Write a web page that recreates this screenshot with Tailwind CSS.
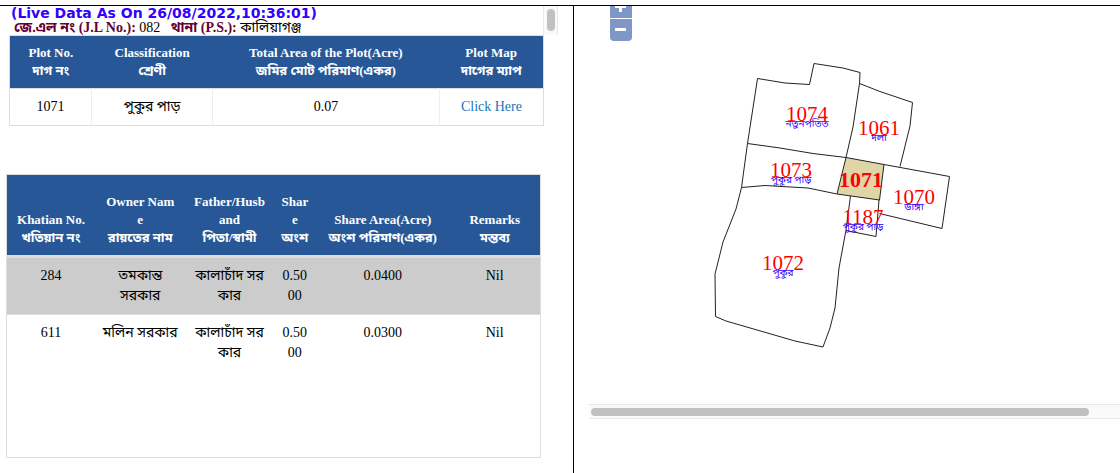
<!DOCTYPE html>
<html lang="bn">
<head>
<meta charset="utf-8">
<title>Plot Information</title>
<script src="https://cdn.jsdelivr.net/npm/@tailwindcss/browser@4"></script>
</head>
<body class="flex min-h-screen flex-col bg-white font-['Liberation_Serif','Noto_Sans_Bengali',serif] text-sm text-black">
<div class="h-[6px] border-b border-black"></div>
<main class="flex flex-1">
  <section class="w-[51.25%] shrink-0 border-r border-black">
    <header class="ml-[9px] mr-[15px] flex h-[29px]">
      <div class="flex-1 whitespace-nowrap pl-[2px]">
        <h1 class="font-['DejaVu_Sans',sans-serif] text-[14px] leading-[14px] font-bold text-[#3300ff]">(Live Data As On 26/08/2022,10:36:01)</h1>
        <p class="pl-[3px] leading-[15px]"><b class="text-[#660033]">জে.এল নং (J.L No.):</b> 082 &nbsp; <b class="text-[#660033]">থানা (P.S.):</b> কালিয়াগঞ্জ</p>
      </div>
      <div class="w-[15px] border-x border-[#e8e8e8] bg-[#fafafa] px-[3px] pt-[3px]"><div class="h-[22px] w-2 rounded-full bg-[#c1c1c1]"></div></div>
    </header>
    <table class="ml-[9px] w-[calc(100%-38px)] table-fixed border-collapse border border-[#ddd] text-center">
      <colgroup><col class="w-[15.4%]"><col class="w-[22.6%]"><col class="w-[42.5%]"><col class="w-[19.5%]"></colgroup>
      <thead class="bg-[#275797] text-[13px] leading-[18px] text-white">
        <tr class="h-[53px]">
          <th>Plot No.<br>দাগ নং</th>
          <th>Classification<br>শ্রেণী</th>
          <th>Total Area of the Plot(Acre)<br>জমির মোট পরিমাণ(একর)</th>
          <th>Plot Map<br>দাগের ম্যাপ</th>
        </tr>
      </thead>
      <tbody>
        <tr class="h-[37px] border-t border-[#ddd]">
          <td class="border-r border-[#eee]">1071</td>
          <td class="border-r border-[#eee]">পুকুর পাড়</td>
          <td class="border-r border-[#eee]">0.07</td>
          <td><a href="#map" class="text-[#1b75bb]">Click Here</a></td>
        </tr>
      </tbody>
    </table>
    <div class="mt-12 ml-[6px] mr-8 h-[284px] border border-[#ddd]">
      <table class="w-full table-fixed border-collapse text-center leading-5">
        <colgroup><col class="w-[16.5%]"><col class="w-[17%]"><col class="w-[16.5%]"><col class="w-[8%]"><col class="w-[25%]"><col class="w-[17%]"></colgroup>
        <thead class="bg-[#275797] text-[13px] leading-[18px] text-white">
          <tr class="h-[81px] align-bottom">
            <th class="pb-2">Khatian No.<br>খতিয়ান নং</th>
            <th class="pb-2">Owner Nam<br>e<br>রায়তের নাম</th>
            <th class="pb-2">Father/Husb<br>and<br>পিতা/স্বামী</th>
            <th class="pb-2">Shar<br>e<br>অংশ</th>
            <th class="pb-2">Share Area(Acre)<br>অংশ পরিমাণ(একর)</th>
            <th class="pb-2">Remarks<br>মন্তব্য</th>
          </tr>
        </thead>
        <tbody class="align-top">
          <tr class="h-[58px] border-t-3 border-[#ddd] bg-[#ccc]">
            <td class="pt-2">284</td>
            <td class="pt-2">তমকান্ত<br>সরকার</td>
            <td class="pt-2">কালাচাঁদ সর<br>কার</td>
            <td class="pt-2">0.50<br>00</td>
            <td class="pt-2">0.0400</td>
            <td class="pt-2">Nil</td>
          </tr>
          <tr class="border-t border-[#ddd]">
            <td class="pt-2">611</td>
            <td class="pt-2">মলিন সরকার</td>
            <td class="pt-2">কালাচাঁদ সর<br>কার</td>
            <td class="pt-2">0.50<br>00</td>
            <td class="pt-2">0.0300</td>
            <td class="pt-2">Nil</td>
          </tr>
        </tbody>
      </table>
    </div>
  </section>
  <section id="map" class="min-w-0 flex-1 pl-[15px]">
    <div class="relative h-[398px] overflow-hidden">
      <svg viewBox="589 6 531 398" width="531" height="398" class="block" role="img" aria-label="Plot map">
        <g fill="none" stroke="#222" stroke-width="1">
          <path d="M757.5 78.5 L785 83 L809.5 84.5 L814 63.5 L843 68 L860 72.500 L859.500 83.500 L853 127 L846 157.500 L813 153.500 L780 148 L747.500 143.500 Z"/>
          <path d="M859.500 83.500 L880 91.500 L912.500 102.500 L910 126 L900 166.500"/>
          <path d="M747.500 143.500 L741.500 187.500 L765 185.500 L808 188 L837 194"/>
          <path d="M741.500 187.500 L736 209 L723 242 L715 274 L715.500 316.500 L726 321 L795 341 L823 347 L830 328 L835 308 L839 268 L846 230 L850.500 196"/>
          <path d="M884 164.500 L949.500 176.500 L942 228.500 L879.500 213.500"/>
          <path d="M879 200 L876 236.500 L846 230.500"/>
          <path fill="#e0d5a7" d="M846 157.500 L884 164.500 L879.500 200 L837 194 Z"/>
        </g>
        <g text-anchor="middle" class="fill-[#ff0000] text-[21px]">
          <text x="807" y="121">1074</text>
          <text x="879" y="135">1061</text>
          <text x="791" y="177">1073</text>
          <text x="861" y="187" class="font-bold text-[22px]">1071</text>
          <text x="914" y="204">1070</text>
          <text x="863" y="224">1187</text>
          <text x="783" y="270">1072</text>
        </g>
        <g text-anchor="middle" class="fill-[#3300ff] text-[10px]">
          <text x="807" y="127">নতুনপতিত</text>
          <text x="879" y="141">দলা</text>
          <text x="791" y="183">পুকুর পাড়</text>
          <text x="914" y="210">ডাঙ্গা</text>
          <text x="863" y="230">পুকুর পাড়</text>
          <text x="783" y="276">পুকুর</text>
        </g>
      </svg>
      <div class="absolute top-0 left-[21px] flex w-[22px] flex-col gap-px text-white">
        <button type="button" aria-label="Zoom in" class="h-[12px] bg-[#7f97c7]"><svg viewBox="0 0 22 12" class="block" width="22" height="12"><path d="M5 0h11v2H5zM9 0h3v6H9z" fill="currentColor"/></svg></button>
        <button type="button" aria-label="Zoom out" class="h-[22px] rounded-b-[4px] bg-[#7f97c7]"><svg viewBox="0 0 22 22" class="block" width="22" height="22"><path d="M5 9h11v3H5z" fill="currentColor"/></svg></button>
      </div>
    </div>
    <div class="h-[15px] border-y border-[#e8e8e8] bg-[#fafafa] px-[2px] pt-[3px]"><div class="h-2 w-[94.5%] rounded-full bg-[#c1c1c1]"></div></div>
  </section>
</main>
</body>
</html>
